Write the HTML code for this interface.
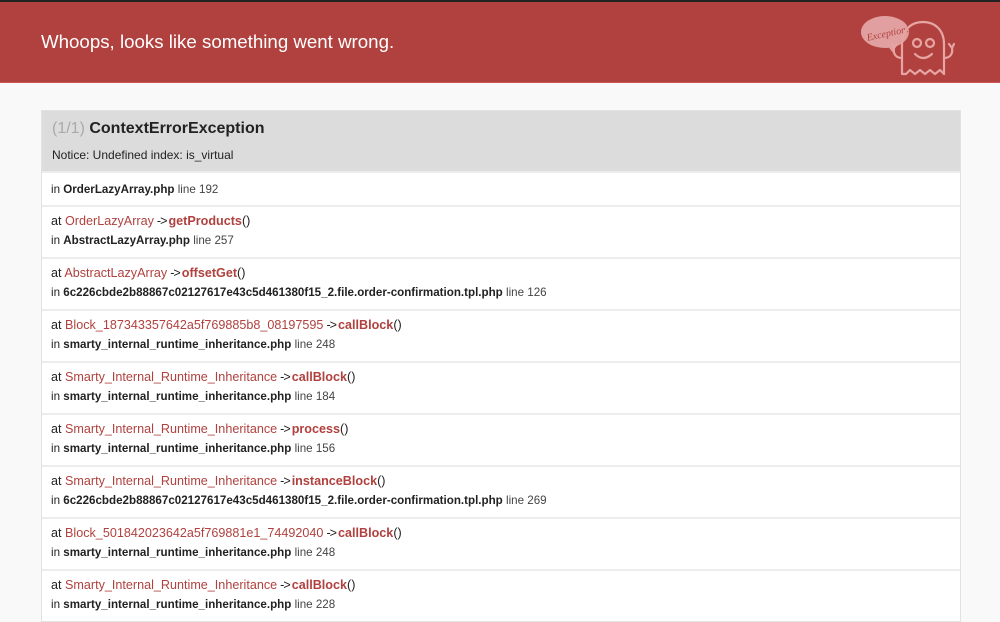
<!DOCTYPE html>
<html><head><meta charset="utf-8"><style>
*{margin:0;padding:0;box-sizing:border-box}
body{width:1000px;height:601px;overflow:hidden;background:#f9f9f9;font-family:"Liberation Sans",Arial,sans-serif;color:#222;position:relative}
.top{height:2px;background:#222}
.hdr{height:81px;background:#b0413e;position:relative;border-bottom:1px solid #c55}
.hdr h1{position:absolute;left:41px;top:29px;font-size:18.7px;font-weight:normal;color:#fff}
.box{position:absolute;left:41px;top:110px;width:920px;border:1px solid #e2e2e2;background:#fff}
.head{background:#dcdcdc;height:60px;padding:9px 10px}
.head h2{font-size:16px;font-weight:bold;color:#222}
.head h2 span{color:#aaa;font-weight:normal}
.head p{font-size:12px;margin-top:10px}
.r{border-top:2px solid #ececec;padding:0 9px;font-size:11.6px}
.r1{height:34px;padding-top:10px}
.r2{height:52px;padding-top:6px}
.r2 .a{font-size:12.6px;line-height:16px}
.r2 .b{margin-top:4px;line-height:16px}
.red{color:#b0413e}
b{font-weight:bold}
.g{color:#444}
.ar{letter-spacing:-1px;margin:0 2px 0 3px}
</style></head><body>
<div class="top"></div>
<div class="hdr"><h1>Whoops, looks like something went wrong.</h1>
<svg style="position:absolute;left:856px;top:8px" width="110" height="72" viewBox="0 0 110 72" fill="none" stroke="#e6a4a2" stroke-width="2.2" stroke-linejoin="round" stroke-linecap="round">
<ellipse cx="29" cy="22" rx="24" ry="16" fill="#e1a09f" stroke="none"/>
<path d="M30 34 L38 44 L38 32 Z" fill="#e1a09f" stroke="none"/>
<text x="10" y="27" transform="rotate(-12 29 22)" font-family="Liberation Serif,serif" font-style="italic" font-size="10" fill="#b0413e" stroke="none">Exception!</text>
<path d="M46 64 V34 C46 20 55 12 67 12 C79 12 88 20 88 34 V64 L84 60 L79 64 L74 60 L69 64 L64 60 L59 64 L54 60 L50 64 Z"/>
<circle cx="61" cy="33" r="4"/><circle cx="74" cy="33" r="4"/>
<path d="M59 44 Q67 52 76 44"/>
<path d="M46 48 C40 48 37 44 38 38 M38 38 L36 34 M38 38 L41 34 M88 48 C94 48 97 44 96 38 M96 38 L98 34 M96 38 L93 34"/>
</svg>
</div>
<div class="box">
<div class="head"><h2><span>(1/1)</span> ContextErrorException</h2><p>Notice: Undefined index: is_virtual</p></div>
<div class="r r1">in <b>OrderLazyArray.php</b> <span class="g">line 192</span></div>
<div class="r r2"><div class="a">at <span class="red">OrderLazyArray</span><span class="ar">-&gt;</span><b class="red">getProducts</b>()</div><div class="b">in <b>AbstractLazyArray.php</b> <span class="g">line 257</span></div></div>
<div class="r r2"><div class="a">at <span class="red">AbstractLazyArray</span><span class="ar">-&gt;</span><b class="red">offsetGet</b>()</div><div class="b">in <b>6c226cbde2b88867c02127617e43c5d461380f15_2.file.order-confirmation.tpl.php</b> <span class="g">line 126</span></div></div>
<div class="r r2"><div class="a">at <span class="red">Block_187343357642a5f769885b8_08197595</span><span class="ar">-&gt;</span><b class="red">callBlock</b>()</div><div class="b">in <b>smarty_internal_runtime_inheritance.php</b> <span class="g">line 248</span></div></div>
<div class="r r2"><div class="a">at <span class="red">Smarty_Internal_Runtime_Inheritance</span><span class="ar">-&gt;</span><b class="red">callBlock</b>()</div><div class="b">in <b>smarty_internal_runtime_inheritance.php</b> <span class="g">line 184</span></div></div>
<div class="r r2"><div class="a">at <span class="red">Smarty_Internal_Runtime_Inheritance</span><span class="ar">-&gt;</span><b class="red">process</b>()</div><div class="b">in <b>smarty_internal_runtime_inheritance.php</b> <span class="g">line 156</span></div></div>
<div class="r r2"><div class="a">at <span class="red">Smarty_Internal_Runtime_Inheritance</span><span class="ar">-&gt;</span><b class="red">instanceBlock</b>()</div><div class="b">in <b>6c226cbde2b88867c02127617e43c5d461380f15_2.file.order-confirmation.tpl.php</b> <span class="g">line 269</span></div></div>
<div class="r r2"><div class="a">at <span class="red">Block_501842023642a5f769881e1_74492040</span><span class="ar">-&gt;</span><b class="red">callBlock</b>()</div><div class="b">in <b>smarty_internal_runtime_inheritance.php</b> <span class="g">line 248</span></div></div>
<div class="r r2"><div class="a">at <span class="red">Smarty_Internal_Runtime_Inheritance</span><span class="ar">-&gt;</span><b class="red">callBlock</b>()</div><div class="b">in <b>smarty_internal_runtime_inheritance.php</b> <span class="g">line 228</span></div></div>
</div>
</body></html>
